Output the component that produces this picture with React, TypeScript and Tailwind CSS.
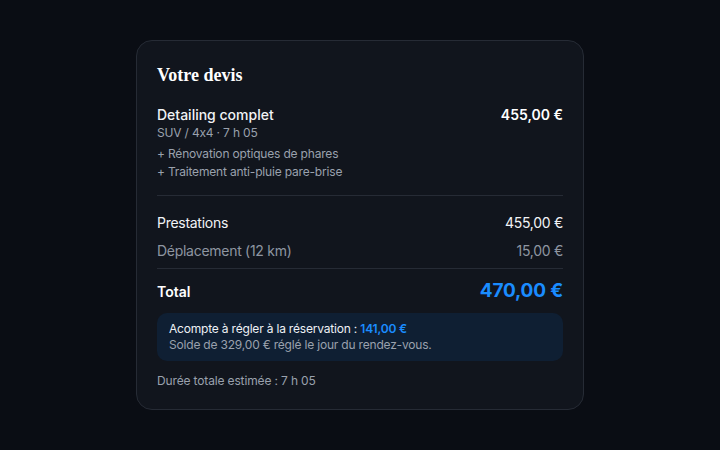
const lines = [
  '+ Rénovation optiques de phares',
  '+ Traitement anti-pluie pare-brise',
];

export default function App() {
  return (
    <div
      className="flex h-[450px] w-[720px] items-center justify-center bg-[#0a0d14] text-white"
      style={{ fontFamily: 'Inter, "Noto Sans", sans-serif' }}
    >
      <div className="flex h-[370px] w-[448px] flex-col rounded-2xl border border-[#262b35] bg-[#11151d] px-[20px] pt-[21px]">
        <h2 className="text-[18px] leading-[26px] font-bold text-white" style={{ fontFamily: '"Liberation Serif", serif' }}>
          Votre devis
        </h2>

        <div className="mt-[17px] flex items-start justify-between">
          <div>
            <div className="text-[14px] leading-[20px] font-medium text-[#f1f3f6]">Detailing complet</div>
            <div className="text-[12px] leading-[16px] tracking-[-0.015em] text-[#9aa1ad] [font-feature-settings:'calt'_0]">SUV / 4x4 · 7 h 05</div>
            <div className="mt-[4px]">
              {lines.map((l) => (
                <div key={l} className="text-[12px] leading-[18px] tracking-[-0.015em] text-[#9aa1ad]">
                  {l}
                </div>
              ))}
            </div>
          </div>
          <div className="text-[14px] leading-[20px] font-semibold text-white">455,00 €</div>
        </div>

        <div className="mt-[14px] border-t border-[#262b35]" />

        <div className="mt-[17px] flex justify-between text-[14px] leading-[20px] tracking-[-0.02em] text-[#f1f3f6]">
          <span>Prestations</span>
          <span>455,00 €</span>
        </div>
        <div className="mt-[8px] flex justify-between text-[14px] leading-[20px] tracking-[-0.02em] text-[#8e95a1]">
          <span>Déplacement (12 km)</span>
          <span>15,00 €</span>
        </div>

        <div className="mt-[7px] border-t border-[#262b35]" />

        <div className="mt-[9px] flex items-center justify-between">
          <span className="text-[14px] font-semibold text-white">Total</span>
          <span className="text-[19px] leading-[26px] font-bold tracking-[-0.01em] text-[#1a8cff]">470,00 €</span>
        </div>

        <div className="mt-[9px] rounded-[10px] bg-[#0f1f33] px-[12px] py-[8px] tracking-[-0.012em]">
          <div className="text-[12px] leading-[16px] text-[#eef1f5]">
            Acompte à régler à la réservation : <span className="font-semibold text-[#1a8cff]">141,00 €</span>
          </div>
          <div className="text-[12px] leading-[16px] text-[#9aa1ad]">Solde de 329,00 € réglé le jour du rendez-vous.</div>
        </div>

        <div className="mt-[12px] text-[12px] leading-[16px] tracking-[-0.012em] text-[#9aa1ad]">Durée totale estimée : 7 h 05</div>
      </div>
    </div>
  );
}
